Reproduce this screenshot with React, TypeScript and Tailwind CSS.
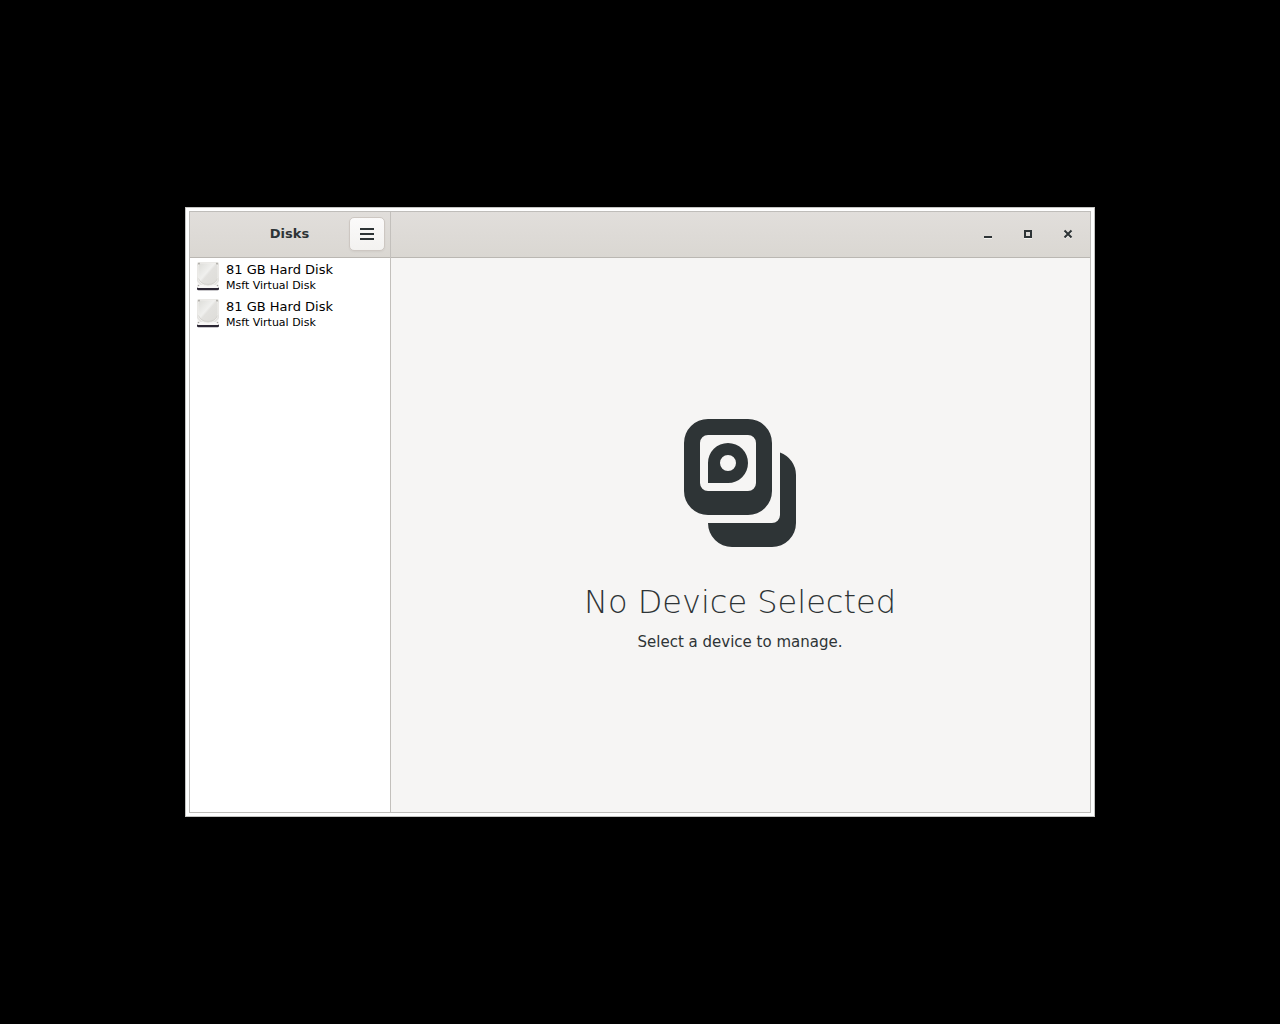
const disks = [
  { id: "disk-0", name: "81 GB Hard Disk", model: "Msft Virtual Disk" },
  { id: "disk-1", name: "81 GB Hard Disk", model: "Msft Virtual Disk" },
];

function DriveIcon() {
  return (
    <svg className="h-8 w-8 shrink-0" viewBox="0 0 32 32" aria-hidden="true">
      <defs>
        <linearGradient id="plate" x1="0" y1="0" x2="1" y2="1">
          <stop offset="0" stopColor="#dcdcd8" />
          <stop offset="0.42" stopColor="#f0f0ee" />
          <stop offset="0.5" stopColor="#e2e1de" />
          <stop offset="1" stopColor="#dddcd8" />
        </linearGradient>
      </defs>
      <rect x="5" y="24" width="22" height="6.2" rx="1.5" fill="#2b2633" />
      <rect x="5" y="2" width="22" height="26" rx="2" fill="#e4e3e0" />
      <path d="M5 21l3 4h16l3-4v5.5a1.5 1.5 0 0 1-1.5 1.5h-19A1.5 1.5 0 0 1 5 26.5z" fill="#f8f7f6" />
      <path d="M8 3h16l2 3v10.5a10 9.5 0 0 1-20 0V6z" fill="url(#plate)" stroke="#f2f1ef" strokeWidth="0.8" />
      <path d="M6.5 18.5a10 8.5 0 0 0 19 0" fill="none" stroke="#cfcdc8" strokeWidth="0.7" />
      <g fill="#a9a7a2">
        <circle cx="7" cy="3.7" r="0.9" />
        <circle cx="25" cy="3.7" r="0.9" />
        <circle cx="6.5" cy="25.5" r="0.8" />
        <circle cx="25.5" cy="25.5" r="0.8" />
      </g>
    </svg>
  );
}

function DisksSymbol() {
  return (
    <svg className="h-32 w-32" viewBox="0 0 128 128" fill="#2e3436" aria-hidden="true">
      <path
        fillRule="evenodd"
        d="M32 0h40a24 24 0 0 1 24 24v48a24 24 0 0 1-24 24H32A24 24 0 0 1 8 72V24A24 24 0 0 1 32 0zM32 16a8 8 0 0 0-8 8v40a8 8 0 0 0 8 8h40a8 8 0 0 0 8-8V24a8 8 0 0 0-8-8z"
      />
      <path
        fillRule="evenodd"
        d="M32 64V44a20 20 0 1 1 20 20zM52 36a8 8 0 1 0 0 16a8 8 0 0 0 0-16z"
      />
      <path d="M104 33.4A24 24 0 0 1 120 56v48a24 24 0 0 1-24 24H56a24 24 0 0 1-24-24h64a8 8 0 0 0 8-8z" />
    </svg>
  );
}

export default function App() {
  return (
    <div className="flex min-h-screen bg-black px-[185px] py-[207px] font-['DejaVu_Sans',sans-serif] text-[#2e3436]">
      <div className="flex flex-1 border border-[#c4c4c2] bg-white p-[3px]">
        <div className="flex flex-1 border border-[#bfbdba]">
          <aside className="flex w-[201px] shrink-0 flex-col border-r border-[#c3c0bc] bg-white">
            <header className="grid h-[46px] shrink-0 grid-cols-[1fr_auto_1fr] items-center border-b border-[#bab7b2] bg-linear-to-b from-[#e1dedb] to-[#dad7d2] pr-[5px] pb-0.5 pl-1">
              <h1 className="col-start-2 text-[13px] leading-4 font-bold">Disks</h1>
              <button
                type="button"
                aria-label="Menu"
                className="flex h-[34px] w-9 items-center justify-center justify-self-end rounded-[5px] border border-[#cdc7c2] bg-linear-to-b from-[#fbfafa] to-[#f3f2f0] shadow-xs"
              >
                <svg className="h-4 w-4" viewBox="0 0 16 16" fill="#2e3436" aria-hidden="true">
                  <path d="M1 2h14v2H1zM1 7h14v2H1zM1 12h14v2H1z" />
                </svg>
              </button>
            </header>
            <ul>
              {disks.map((disk) => (
                <li key={disk.id}>
                  <button type="button" className="flex h-[37px] w-full items-start gap-0.5 pt-0.5 pl-0.5 text-left text-black">
                    <DriveIcon />
                    <span className="flex flex-col pt-0.5">
                      <span className="text-[13px] leading-4">{disk.name}</span>
                      <span className="text-[11px] leading-4">{disk.model}</span>
                    </span>
                  </button>
                </li>
              ))}
            </ul>
          </aside>
          <main className="flex flex-1 flex-col bg-[#f6f5f4]">
            <header className="flex h-[46px] shrink-0 items-center justify-end gap-4 border-b border-[#bab7b2] bg-linear-to-b from-[#e1dedb] to-[#dad7d2] pr-2.5 pb-0.5">
              <button type="button" aria-label="Minimize" className="flex h-6 w-6 items-center justify-center">
                <svg className="h-4 w-4" viewBox="0 0 16 16" aria-hidden="true">
                  <path d="M4 12h8v1H4z" fill="#f3f2f0" />
                  <path d="M4 10h8v2H4z" fill="#2e3436" />
                </svg>
              </button>
              <button type="button" aria-label="Maximize" className="flex h-6 w-6 items-center justify-center">
                <svg className="h-4 w-4" viewBox="0 0 16 16" aria-hidden="true">
                  <path d="M4 12h8v1H4z" fill="#f3f2f0" />
                  <path d="M5 5h6v6H5z" fill="none" stroke="#2e3436" strokeWidth="2" />
                </svg>
              </button>
              <button type="button" aria-label="Close" className="flex h-6 w-6 items-center justify-center">
                <svg className="h-4 w-4" viewBox="0 0 16 16" fill="none" strokeWidth="2" aria-hidden="true">
                  <path d="M4.5 5.5l7 7M11.5 5.5l-7 7" stroke="#f3f2f0" />
                  <path d="M4.5 4.5l7 7M11.5 4.5l-7 7" stroke="#2e3436" />
                </svg>
              </button>
            </header>
            <section className="flex flex-1 flex-col items-center justify-center pr-px">
              <DisksSymbol />
              <h2 className="mt-9 font-['DejaVu_Sans_Light','DejaVu_Sans',sans-serif] text-[32px] leading-[38px] font-extralight">
                No Device Selected
              </h2>
              <p className="mt-3 text-[15px] leading-[18px]">Select a device to manage.</p>
            </section>
          </main>
        </div>
      </div>
    </div>
  );
}
